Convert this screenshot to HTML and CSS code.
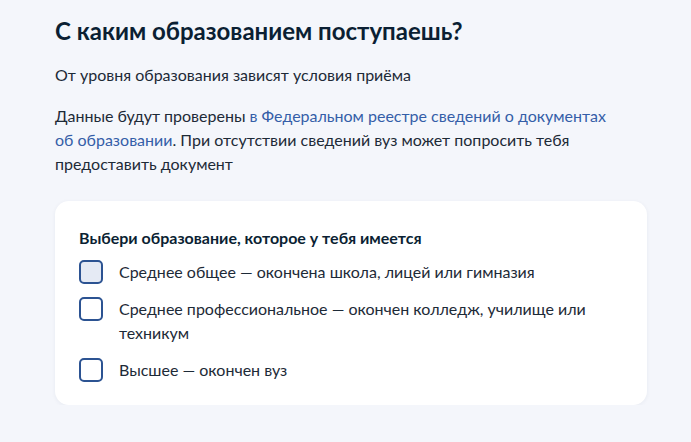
FILE: index.html
```html
<!DOCTYPE html>
<html lang="ru">
<head>
<meta charset="utf-8">
<link rel="stylesheet" href="styles.css">
</head>
<body>
<main class="page">
  <h1 class="title">С каким образованием поступаешь?</h1>
  <p class="text first">От уровня образования зависят условия приёма</p>
  <p class="text second">Данные будут проверены <a class="link" href="#">в Федеральном реестре сведений о документах об образовании</a>. При отсутствии сведений вуз может попросить тебя предоставить документ</p>
  <section class="card">
    <h2 class="card-title">Выбери образование, которое у тебя имеется</h2>
    <ul class="options">
      <li class="option"><span class="box hover"></span><span class="label">Среднее общее — окончена школа, лицей или гимназия</span></li>
      <li class="option"><span class="box"></span><span class="label">Среднее профессиональное — окончен колледж, училище или техникум</span></li>
      <li class="option"><span class="box"></span><span class="label">Высшее — окончен вуз</span></li>
    </ul>
  </section>
</main>
</body>
</html>
```
FILE: styles.css
```css
html, body {
  margin: 0;
  padding: 0;
  background: #f4f6fb;
}
body {
  font-family: Lato, "Noto Sans", sans-serif;
  color: #0b1f33;
}
.page {
  padding: 15px 44px 0 55px;
  width: 592px;
}
.title {
  margin: 0;
  font-size: 24px;
  line-height: 32px;
  font-weight: 700;
  color: #0b1f33;
}
.text {
  margin: 0;
  max-width: 560px;
  font-size: 16px;
  line-height: 24px;
  color: #1d2a37;
}
.first {
  margin-top: 16px;
}
.second {
  margin-top: 17px;
}
.link {
  color: #345ea8;
  text-decoration: none;
}
.card {
  margin-top: 25px;
  background: #fff;
  border-radius: 14px;
  padding: 25px 24px 23px;
  box-shadow: 0 1px 4px rgba(30, 50, 90, 0.06);
}
.card-title {
  margin: 0;
  font-size: 16px;
  line-height: 24px;
  font-weight: 700;
  color: #0b1f33;
}
.options {
  list-style: none;
  margin: 10px 0 0;
  padding: 0;
  display: flex;
  flex-direction: column;
  gap: 13px;
}
.option {
  display: flex;
  align-items: flex-start;
  gap: 16px;
}
.box {
  flex: none;
  width: 24px;
  height: 24px;
  box-sizing: border-box;
  border: 2px solid #2c5392;
  border-radius: 5px;
  background: #fff;
}
.box.hover {
  background: #e5eaf4;
}
.label {
  font-size: 16px;
  line-height: 24px;
  color: #1d2a37;
}
```
